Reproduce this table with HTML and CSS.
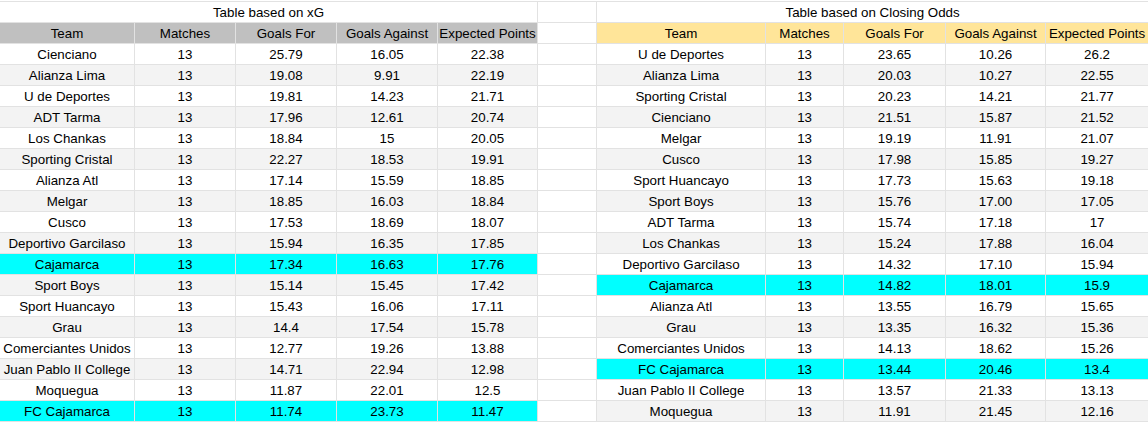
FILE: index.html
```html
<!DOCTYPE html>
<html>
<head>
<meta charset="utf-8">
<link rel="stylesheet" href="styles.css">
</head>
<body>
<div class="sheet">
  <table class="tbl tbl-xg">
    <colgroup><col class="w-team"><col class="w-num"><col class="w-num"><col class="w-num"><col class="w-last"></colgroup>
    <tr class="title"><td colspan="5">Table based on xG</td></tr>
    <tr class="head"><td>Team</td><td>Matches</td><td>Goals For</td><td>Goals Against</td><td>Expected Points</td></tr>
    <tr><td>Cienciano</td><td>13</td><td>25.79</td><td>16.05</td><td>22.38</td></tr>
    <tr class="alt"><td>Alianza Lima</td><td>13</td><td>19.08</td><td>9.91</td><td>22.19</td></tr>
    <tr><td>U de Deportes</td><td>13</td><td>19.81</td><td>14.23</td><td>21.71</td></tr>
    <tr class="alt"><td>ADT Tarma</td><td>13</td><td>17.96</td><td>12.61</td><td>20.74</td></tr>
    <tr><td>Los Chankas</td><td>13</td><td>18.84</td><td>15</td><td>20.05</td></tr>
    <tr class="alt"><td>Sporting Cristal</td><td>13</td><td>22.27</td><td>18.53</td><td>19.91</td></tr>
    <tr><td>Alianza Atl</td><td>13</td><td>17.14</td><td>15.59</td><td>18.85</td></tr>
    <tr class="alt"><td>Melgar</td><td>13</td><td>18.85</td><td>16.03</td><td>18.84</td></tr>
    <tr><td>Cusco</td><td>13</td><td>17.53</td><td>18.69</td><td>18.07</td></tr>
    <tr class="alt"><td>Deportivo Garcilaso</td><td>13</td><td>15.94</td><td>16.35</td><td>17.85</td></tr>
    <tr class="hl"><td>Cajamarca</td><td>13</td><td>17.34</td><td>16.63</td><td>17.76</td></tr>
    <tr class="alt"><td>Sport Boys</td><td>13</td><td>15.14</td><td>15.45</td><td>17.42</td></tr>
    <tr><td>Sport Huancayo</td><td>13</td><td>15.43</td><td>16.06</td><td>17.11</td></tr>
    <tr class="alt"><td>Grau</td><td>13</td><td>14.4</td><td>17.54</td><td>15.78</td></tr>
    <tr><td>Comerciantes Unidos</td><td>13</td><td>12.77</td><td>19.26</td><td>13.88</td></tr>
    <tr class="alt"><td>Juan Pablo II College</td><td>13</td><td>14.71</td><td>22.94</td><td>12.98</td></tr>
    <tr><td>Moquegua</td><td>13</td><td>11.87</td><td>22.01</td><td>12.5</td></tr>
    <tr class="hl"><td>FC Cajamarca</td><td>13</td><td>11.74</td><td>23.73</td><td>11.47</td></tr>
  </table>
  <div class="spacer"></div>
  <table class="tbl tbl-odds">
    <colgroup><col class="w-team2"><col class="w-match2"><col class="w-gf2"><col class="w-ga2"><col class="w-ep2"></colgroup>
    <tr class="title"><td colspan="5">Table based on Closing Odds</td></tr>
    <tr class="head"><td>Team</td><td>Matches</td><td>Goals For</td><td>Goals Against</td><td>Expected Points</td></tr>
    <tr><td>U de Deportes</td><td>13</td><td>23.65</td><td>10.26</td><td>26.2</td></tr>
    <tr class="alt"><td>Alianza Lima</td><td>13</td><td>20.03</td><td>10.27</td><td>22.55</td></tr>
    <tr><td>Sporting Cristal</td><td>13</td><td>20.23</td><td>14.21</td><td>21.77</td></tr>
    <tr class="alt"><td>Cienciano</td><td>13</td><td>21.51</td><td>15.87</td><td>21.52</td></tr>
    <tr><td>Melgar</td><td>13</td><td>19.19</td><td>11.91</td><td>21.07</td></tr>
    <tr class="alt"><td>Cusco</td><td>13</td><td>17.98</td><td>15.85</td><td>19.27</td></tr>
    <tr><td>Sport Huancayo</td><td>13</td><td>17.73</td><td>15.63</td><td>19.18</td></tr>
    <tr class="alt"><td>Sport Boys</td><td>13</td><td>15.76</td><td>17.00</td><td>17.05</td></tr>
    <tr><td>ADT Tarma</td><td>13</td><td>15.74</td><td>17.18</td><td>17</td></tr>
    <tr class="alt"><td>Los Chankas</td><td>13</td><td>15.24</td><td>17.88</td><td>16.04</td></tr>
    <tr><td>Deportivo Garcilaso</td><td>13</td><td>14.32</td><td>17.10</td><td>15.94</td></tr>
    <tr class="hl"><td>Cajamarca</td><td>13</td><td>14.82</td><td>18.01</td><td>15.9</td></tr>
    <tr><td>Alianza Atl</td><td>13</td><td>13.55</td><td>16.79</td><td>15.65</td></tr>
    <tr class="alt"><td>Grau</td><td>13</td><td>13.35</td><td>16.32</td><td>15.36</td></tr>
    <tr><td>Comerciantes Unidos</td><td>13</td><td>14.13</td><td>18.62</td><td>15.26</td></tr>
    <tr class="hl"><td>FC Cajamarca</td><td>13</td><td>13.44</td><td>20.46</td><td>13.4</td></tr>
    <tr><td>Juan Pablo II College</td><td>13</td><td>13.57</td><td>21.33</td><td>13.13</td></tr>
    <tr class="alt"><td>Moquegua</td><td>13</td><td>11.91</td><td>21.45</td><td>12.16</td></tr>
  </table>
</div>
</body>
</html>
```
FILE: styles.css
```css
html, body {
  margin: 0;
  padding: 0;
  background: #ffffff;
}

.sheet {
  display: flex;
  align-items: flex-start;
  width: 1148px;
  margin-top: 1px;
  border-top: 1px solid #e2e2e2;
  overflow: hidden;
  font-family: "Liberation Sans", Arial, sans-serif;
  font-size: 13.33px;
  color: #000000;
}

.tbl {
  border-collapse: separate;
  border-spacing: 0;
  table-layout: fixed;
  flex: none;
}

.tbl-xg { width: 538px; }
.tbl-odds { width: 552px; }

.w-team { width: 135px; }
.w-num { width: 101px; }
.w-last { width: 100px; }

.w-team2 { width: 169px; }
.w-match2 { width: 78px; }
.w-gf2 { width: 102px; }
.w-ga2 { width: 100px; }
.w-ep2 { width: 103px; }

.tbl tr {
  height: 21px;
}

.tbl td {
  padding: 2px 0 0;
  height: 21px;
  line-height: 18px;
  text-align: center;
  white-space: nowrap;
  overflow: hidden;
  border-right: 1px solid #e2e2e2;
  border-bottom: 1px solid #e2e2e2;
  box-sizing: border-box;
}

.tbl .alt td { background: #f3f3f3; }
.tbl .hl td { background: #00ffff; }
.tbl .title td { background: #ffffff; }

.tbl-xg .head td { background: #c0c0c0; }
.tbl-odds .head td { background: #ffe599; }

.spacer {
  flex: none;
  width: 59px;
  height: 420px;
  box-sizing: border-box;
  border-right: 1px solid #e2e2e2;
  background: repeating-linear-gradient(to bottom, #ffffff 0, #ffffff 20px, #e2e2e2 20px, #e2e2e2 21px);
}
```
